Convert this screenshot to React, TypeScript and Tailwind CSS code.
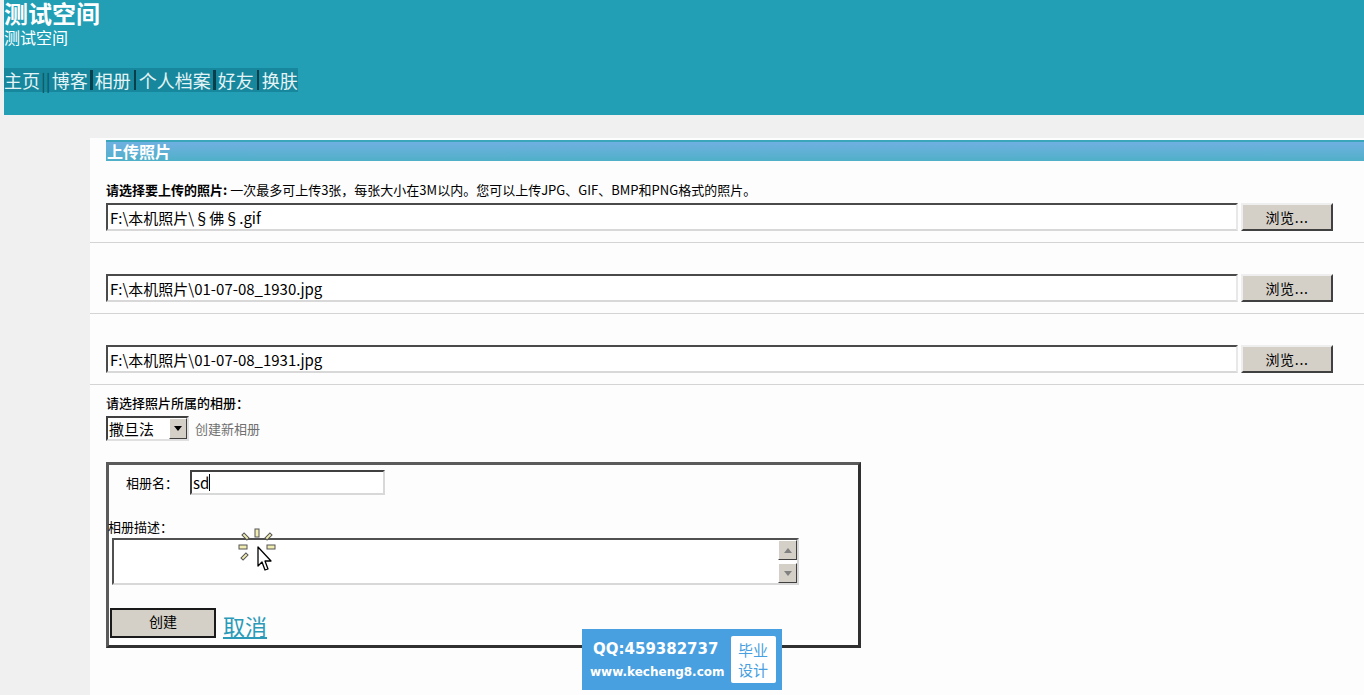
import React from "react"

const cjk = { fontFamily: '"Noto Sans CJK SC", "Liberation Sans", sans-serif' }

function FileRow({ value }: { value: string }) {
  return (
    <div className="border-b border-[#d4d4d4] pb-[11px]">
      <div className="flex items-center gap-[3px] pl-4">
        <div className="w-[1132px] h-[28px] border-2 border-t-[#4a4a4a] border-l-[#4a4a4a] border-b-[#d8d8d8] border-r-[#e8e8e8] bg-white flex items-center px-[2px] text-[15px] text-black leading-none">
          {value}
        </div>
        <div className="w-[92px] h-[28px] bg-[#d4d0c8] border-2 border-t-[#eeeeee] border-l-[#eeeeee] border-b-[#404040] border-r-[#404040] flex items-center justify-center text-[14px] text-black tracking-wider">
          浏览...
        </div>
      </div>
    </div>
  )
}

function Cursor() {
  return (
    <svg width="40" height="46" viewBox="0 0 40 46" className="absolute left-[238px] top-[528px]">
      <g fill="#f1edb0" stroke="#555" strokeWidth="1">
        <rect x="17" y="1" width="4" height="8" />
        <rect x="1" y="17" width="8" height="4" />
        <rect x="29" y="17" width="8" height="4" />
        <rect x="6" y="5" width="3" height="7" transform="rotate(-45 7.5 8.5)" />
        <rect x="29" y="5" width="3" height="7" transform="rotate(45 30.5 8.5)" />
        <rect x="5" y="25" width="3" height="7" transform="rotate(45 6.5 28.5)" />
      </g>
      <path d="M20 19 L20 38 L24 34 L27 42 L30 41 L27 33 L33 33 Z" fill="#fff" stroke="#000" strokeWidth="1.3" strokeLinejoin="round" />
    </svg>
  )
}

export default function App() {
  return (
    <div className="relative w-[1364px] h-[695px] overflow-hidden bg-[#f0f0f0]" style={cjk}>
      <header className="ml-[4px] h-[115px] bg-[#229fb5] text-white">
        <h1 className="text-[24px] font-bold leading-[25px]">测试空间</h1>
        <p className="text-[16px] leading-[18px] mt-[3px]">测试空间</p>
        <nav className="mt-[22px] inline-flex items-stretch h-[24px] bg-[#16879c] text-[18px] leading-[24px] text-[#e4f4f6]">
          <span>主页</span>
          <span className="text-[#0f5563] px-[1px]">||</span>
          <span>博客</span>
          <span className="w-[3px] bg-[#0a3f4a] mx-[2px] my-[2px]" />
          <span>相册</span>
          <span className="w-[2px] bg-[#0a3f4a] mx-[3px] my-[2px]" />
          <span>个人档案</span>
          <span className="w-[3px] bg-[#0a3f4a] mx-[2px] my-[2px]" />
          <span>好友</span>
          <span className="w-[2px] bg-[#0a3f4a] mx-[3px] my-[2px]" />
          <span>换肤</span>
        </nav>
      </header>

      <main className="ml-[90px] mt-[23px] bg-[#fdfdfd] h-[557px] pt-[2px]">
        <div className="ml-4 h-[21px] border-t-2 border-[#3aa6ba] bg-gradient-to-b from-[#6fb0e2] to-[#4fb0c8] text-white font-bold text-[16px] leading-[19px] pl-[1px]">
          上传照片
        </div>

        <p className="pl-4 mt-[21px] text-[13px] leading-[16px] text-black">
          <b>请选择要上传的照片:</b> 一次最多可上传3张，每张大小在3M以内。您可以上传JPG、GIF、BMP和PNG格式的照片。
        </p>
        <div className="mt-[5px] flex flex-col gap-[31px]">
          <FileRow value="F:\本机照片\§佛§.gif" />
          <FileRow value="F:\本机照片\01-07-08_1930.jpg" />
          <FileRow value="F:\本机照片\01-07-08_1931.jpg" />
        </div>

        <div className="pl-4 mt-[10px]">
          <p className="text-[13px] leading-[16px] text-black font-medium">请选择照片所属的相册：</p>
          <div className="mt-[5px] flex items-center gap-[6px]">
            <div className="h-[25px] w-[83px] border-2 border-t-[#404040] border-l-[#404040] border-b-[#e0e0e0] border-r-[#e0e0e0] bg-white flex items-center text-[15px] text-black">
              <span className="flex-1 pl-[1px] leading-none">撒旦法</span>
              <span className="w-[18px] h-[21px] bg-[#d4d0c8] border border-t-white border-l-white border-b-[#404040] border-r-[#404040] flex items-center justify-center">
                <svg width="8" height="5" viewBox="0 0 8 5"><path d="M0 0h8L4 5z" fill="#000" /></svg>
              </span>
            </div>
            <span className="text-[13px] text-[#707070]">创建新相册</span>
          </div>

          <div className="mt-[21px] w-[755px] h-[186px] border-[3px] border-t-[#5a5a5a] border-l-[#5a5a5a] border-b-[#303030] border-r-[#303030] bg-[#fdfdfd] relative">
            <div className="flex items-center mt-[5px]">
              <span className="ml-[17px] text-[13px] text-black w-[64px]">相册名：</span>
              <div className="w-[195px] h-[25px] border-2 border-t-[#404040] border-l-[#404040] border-b-[#d8d8d8] border-r-[#d8d8d8] bg-white flex items-center text-[15px] leading-none pl-[1px]">
                sd<span className="w-[1px] h-[17px] bg-black" />
              </div>
            </div>
            <p className="mt-[24px] -ml-[1px] text-[13px] leading-[16px] text-black">相册描述：</p>
            <div className="mt-[3px] ml-[3px] w-[687px] h-[47px] border-2 border-t-[#505050] border-l-[#505050] border-b-[#d8d8d8] border-r-[#d8d8d8] bg-white flex justify-end">
              <div className="w-[19px] flex flex-col">
                <span className="h-[20px] bg-[#d4d0c8] border border-t-white border-l-white border-b-[#404040] border-r-[#404040] flex items-center justify-center">
                  <svg width="8" height="5" viewBox="0 0 8 5"><path d="M0 5h8L4 0z" fill="#808080" /></svg>
                </span>
                <span className="flex-1" />
                <span className="h-[20px] bg-[#d4d0c8] border border-t-white border-l-white border-b-[#404040] border-r-[#404040] flex items-center justify-center">
                  <svg width="8" height="5" viewBox="0 0 8 5"><path d="M0 0h8L4 5z" fill="#808080" /></svg>
                </span>
              </div>
            </div>
            <div className="mt-[23px] ml-[1px] flex items-end gap-[7px]">
              <div className="w-[106px] h-[30px] bg-[#d4d0c8] border-2 border-[#1a1a1a] flex items-center justify-center text-[14px] text-black pb-[4px]">
                创建
              </div>
              <span className="text-[22px] leading-[26px] text-[#2a9ab8] underline underline-offset-2">取消</span>
            </div>
          </div>
        </div>
      </main>

      <Cursor />

      <div className="absolute left-[582px] top-[629px] w-[200px] h-[61px] bg-[#48a0e0] flex items-center pl-[8px] gap-[6px]" style={{ fontFamily: '"DejaVu Sans", "Noto Sans CJK SC", sans-serif' }}>
        <div className="flex flex-col text-white font-bold">
          <span className="text-[15px] leading-[20px] pl-[3px]">QQ:459382737</span>
          <span className="text-[12px] leading-[18px] mt-[4px]">www.kecheng8.com</span>
        </div>
        <div className="w-[45px] h-[47px] bg-white rounded-[2px] flex flex-col items-center justify-center text-[#48a0e0] text-[15px] leading-[20px]" style={cjk}>
          <span>毕业</span>
          <span>设计</span>
        </div>
      </div>
    </div>
  )
}
